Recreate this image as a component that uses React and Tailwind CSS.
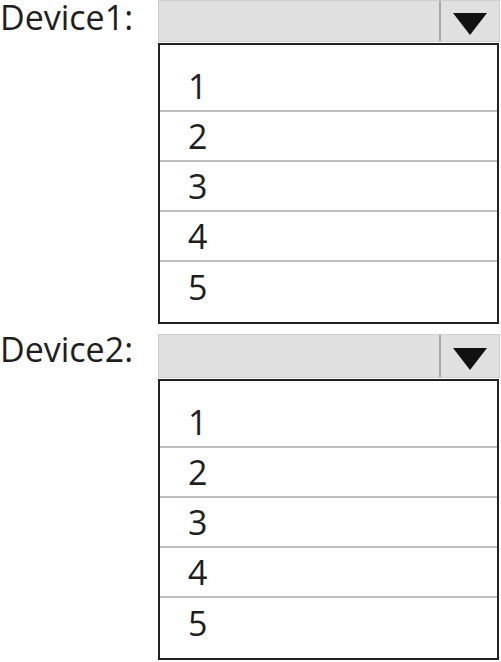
import React from 'react';

const items = ['1', '2', '3', '4', '5'];

const Arrow = () => (
  <svg width="34" height="22" viewBox="0 0 34 22" className="block">
    <polygon points="0,0 34,0 17,22" fill="#111" />
  </svg>
);

const Combo = ({ tall }) => (
  <div
    className={`flex w-[342px] bg-[#e0e0e0] border border-[#cecece] ${
      tall ? 'h-[44px]' : 'h-[42px]'
    }`}
  >
    <div className="flex-1" />
    <div className="w-[60px] border-l-2 border-[#a9a9a9] flex items-center justify-center pt-[5px]">
      <Arrow />
    </div>
  </div>
);

const ListBox = () => (
  <div className="ml-[158px] w-[341px] border-2 border-[#222] bg-white pt-[17px] pb-[10px]">
    {items.map((n, i) => (
      <div
        key={n}
        className={`h-[50px] flex items-center pl-[28px] text-[34px] leading-none text-[#1e1e1e] ${
          i < items.length - 1 ? 'border-b-2 border-[#bfbfbf]' : ''
        }`}
      >
        {n}
      </div>
    ))}
  </div>
);

const Section = ({ label, tall, labelClass }) => (
  <div className="flex flex-col">
    <div className="flex items-start">
      <div className={`w-[158px] text-[34px] leading-[34px] text-[#1e1e1e] ${labelClass}`}>
        {label}
      </div>
      <Combo tall={tall} />
    </div>
    <div className="mt-[1px]">
      <ListBox />
    </div>
  </div>
);

export default function App() {
  return (
    <div
      className="w-[501px] h-[662px] overflow-hidden bg-white flex flex-col gap-[10px]"
      style={{ fontFamily: '"Open Sans", "Noto Sans", sans-serif' }}
    >
      <Section label="Device1:" labelClass="mt-0" />
      <Section label="Device2:" tall labelClass="-mt-[2px]" />
    </div>
  );
}
